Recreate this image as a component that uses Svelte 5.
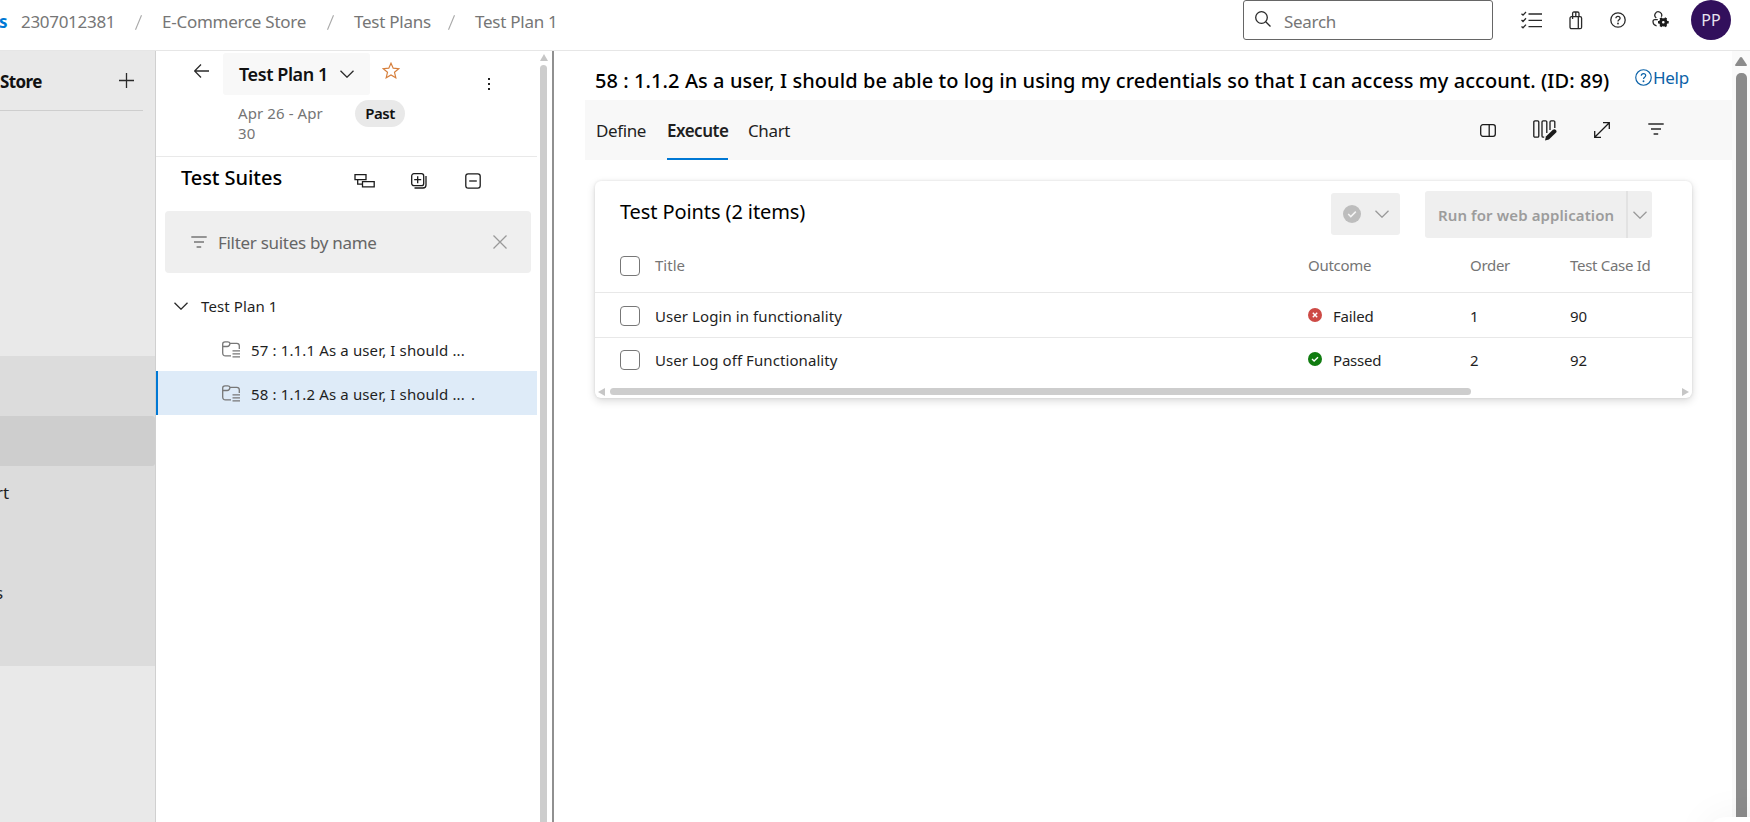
<script>
  const crumbs = [
    { text: '2307012381', w: 93 },
    { text: 'E-Commerce Store', w: 145 },
    { text: 'Test Plans', w: 74 },
    { text: 'Test Plan 1', w: 82 }
  ];
  const suites = [
    { text: '57 : 1.1.1 As a user, I should ...', selected: false },
    { text: '58 : 1.1.2 As a user, I should ...', selected: true }
  ];
  const points = [
    { title: 'User Login in functionality', outcome: 'Failed', order: 1, id: 90 },
    { title: 'User Log off Functionality', outcome: 'Passed', order: 2, id: 92 }
  ];
</script>

{#snippet chevron()}
  <svg class="ico" width="14" height="8" viewBox="0 0 14 8"><path d="M.5.7 7 7.2 13.5.7" /></svg>
{/snippet}

{#snippet filterIcon()}
  <svg class="ico" width="16" height="12" viewBox="0 0 16 12"><path d="M.3 1h15.4M3 6h10M5.6 11h4.6" /></svg>
{/snippet}

<div class="page">
  <header>
    <span class="brand">s</span>
    <nav>
      {#each crumbs as c, i}
        {#if i > 0}<svg class="slash" width="7" height="15" viewBox="0 0 7 15"><path d="M6.5.3.5 14.7" /></svg>{/if}
        <span style="width:{c.w}px">{c.text}</span>
      {/each}
    </nav>
    <div class="search">
      <svg class="ico" width="16" height="16" viewBox="0 0 16 16"><circle cx="6.5" cy="6.5" r="5.8" /><path d="m10.7 10.7 4.8 4.8" /></svg>
      <span>Search</span>
    </div>
    <div class="actions">
      <svg class="ico" width="21" height="18" viewBox="0 0 21 18"><path d="M7.5 3H21M7.5 9.3H21M7.5 15.6H21M.5 2.8 2 4.2 5 1M.5 9.1l1.5 1.4 3-3.2M.5 15.4l1.5 1.4 3-3.2" /></svg>
      <svg class="ico bag" width="14" height="19" viewBox="0 0 14 19"><rect x="1" y="5.700" width="11.600" height="12" rx="1.500" /><path d="M9.300 5.700v12M3.600 8V2.500Q3.600 1 5 1h3.600Q10 1 10 2.500v3.200M6.800 1v5" /></svg>
      <svg class="ico help" width="16" height="16" viewBox="0 0 16 16"><circle cx="8" cy="8" r="7.2" /><path d="M5.900 6.300Q6 4.300 8 4.300t2.100 1.900c0 1.500-2.100 1.600-2.100 3.200" /><circle class="fill" cx="8" cy="11.500" r=".9" /></svg>
      <svg class="ico" width="17" height="17" viewBox="0 0 17 17"><path d="M4.300 7A3.400 3.400 0 1 1 9.300 5.800M5.800 8.600H3A2 2 0 0 0 1 10.600C1 13 2.500 14.400 4.600 14.800" /><circle class="gear" cx="11.300" cy="11.300" r="2.700" /><path class="teeth" d="M8.500 6.900l1 1.700M13.100 14l1 1.700M14.100 6.900l-1 1.700M9.500 14l-1 1.700M6 11.300h2M14.500 11.300h2.200" /></svg>
      <div class="avatar">PP</div>
    </div>
  </header>

  <div class="body">
    <aside>
      <div class="project">
        <b>Store</b>
        <svg class="ico" width="15" height="15" viewBox="0 0 15 15"><path d="M7.500 0v15M0 7.500h15" /></svg>
      </div>
      <div class="group">
        <div class="current"></div>
        <div class="item">rt</div>
        <div class="item gap">s</div>
      </div>
    </aside>

    <section class="plans">
      <div class="plan-head">
        <svg class="ico back" width="15" height="14" viewBox="0 0 15 14"><path d="M15 7H.7M7 .5.600 7 7 13.500" /></svg>
        <div>
          <div class="plan-btn"><b>Test Plan 1</b>{@render chevron()}</div>
          <div class="dates"><span>Apr 26 - Apr<br />30</span><em>Past</em></div>
        </div>
        <svg class="star" width="18" height="17" viewBox="0 0 18 17"><path d="m9 1.200 2.200 5 5.500.5-4.200 3.600 1.300 5.400L9 12.900l-4.800 2.800 1.300-5.400L1.300 6.700l5.500-.5z" /></svg>
        <svg class="kebab" width="4" height="14" viewBox="0 0 4 14"><path d="M1 1h2v2H1zM1 6h2v2H1zM1 11h2v2H1z" /></svg>
      </div>
      <div class="suites-head">
        <h2>Test Suites</h2>
        <svg class="ico dark" width="21" height="16" viewBox="0 0 21 16"><path d="M1 1.700h11v5H1zM8.500 8.700h11.700v5.200H8.500zM3.700 6.700v4.500h4.800" /></svg>
        <svg class="ico dark" width="16" height="16" viewBox="0 0 16 16"><rect x=".7" y=".7" width="12" height="12" rx="2.200" /><path d="M6.700 3.200v7M3.200 6.700h7M15 3v9q0 3-3 3H3.500" /></svg>
        <svg class="ico dark" width="16" height="16" viewBox="0 0 16 16"><rect x=".8" y=".8" width="14.400" height="14.400" rx="2.400" /><path d="M4.200 8h7.600" /></svg>
      </div>
      <div class="filter">
        {@render filterIcon()}
        <span>Filter suites by name</span>
        <svg class="ico x" width="14" height="14" viewBox="0 0 14 14"><path d="m.5.5 13 13M13.500.5l-13 13" /></svg>
      </div>
      <div class="tree">
        <div class="root">{@render chevron()}<span>Test Plan 1</span></div>
        {#each suites as s}
          <div class="suite" class:selected={s.selected}>
            <svg class="ico" width="18" height="17" viewBox="0 0 18 17"><path d="M9 14.800H3.500q-2.800 0-2.800-2.800V3Q.700.800 3 .800h2.800q1.700 0 2.200 1.500h6.800q2.500 0 2.500 2.400V8M.700 5.500h4.500Q7.500 5.500 8 2.300M10.500 9.800H18M10.500 12.800H18M10.500 15.800H18" /></svg>
            <span>{s.text}</span>
            {#if s.selected}<i>.</i>{/if}
          </div>
        {/each}
      </div>
    </section>
    <div class="side-scroll">
      <svg width="8" height="7" viewBox="0 0 8 7"><path d="M4 0 8 7H0z" /></svg>
      <div></div>
    </div>
    <div class="splitter"></div>

    <main>
      <div class="title">
        <h1>58 : 1.1.2 As a user, I should be able to log in using my credentials so that I can access my account. (ID: 89)</h1>
        <a href="#help">
          <svg class="ico" width="17" height="17" viewBox="0 0 16 16"><circle cx="8" cy="8" r="7.300" /><path d="M5.900 6.300Q6 4.300 8 4.300t2.100 1.900c0 1.500-2.100 1.600-2.100 3.200" /><circle class="fill" cx="8" cy="11.500" r=".9" /></svg><span>Help</span>
        </a>
      </div>
      <div class="tabs">
        <span class="define">Define</span>
        <span class="execute">Execute</span>
        <span>Chart</span>
        <div class="tools">
          <svg class="ico dark" width="16" height="13" viewBox="0 0 16 13"><rect x=".7" y=".7" width="14.600" height="11.600" rx="2.200" /><path d="M9.200.7v11.600" /></svg>
          <svg class="ico dark" width="24" height="21" viewBox="0 0 24 21"><rect x=".8" y=".8" width="5" height="16.400" rx="1.200" /><path d="M13.800 13V2q0-1.200-1.200-1.200h-2.400Q9 .8 9 2v14q0 1.200 1.200 1.200h1M21.800 8V2q0-1.200-1.200-1.200h-2.400Q17 .8 17 2v8" /><path class="pencil" d="m12 20.600.9-4.200 7-6.600q1.600-1.200 3 .2 1.300 1.500 0 2.800l-7 6.600z" /></svg>
          <svg class="ico dark" width="16" height="16" viewBox="0 0 16 16"><path d="M.7 15.300 15.300.7M9 .7h6.300V7M.7 9v6.300H7" /></svg>
          {@render filterIcon()}
        </div>
      </div>

      <div class="card">
        <div class="card-head">
          <h3>Test Points (2 items)</h3>
          <div class="btn outcome-btn">
            <svg width="18" height="18" viewBox="0 0 18 18"><circle cx="9" cy="9" r="9" fill="#bdbdbd" /><path d="m5.200 9 2.600 2.600 5-5" fill="none" stroke="#f4f4f4" stroke-width="1.500" /></svg>
            {@render chevron()}
          </div>
          <div class="btn run"><b>Run for web application</b><div>{@render chevron()}</div></div>
        </div>
        <div class="row head">
          <span class="box"></span><span class="t">Title</span><span class="o">Outcome</span><span class="n">Order</span><span>Test Case Id</span>
        </div>
        {#each points as p, i}
          <div class="row" class:last={i === 1}>
            <span class="box"></span>
            <span class="t">{p.title}</span>
            <span class="o">
              <svg width="14" height="14" viewBox="0 0 14 14">
                <circle cx="7" cy="7" r="7" fill={p.outcome === 'Failed' ? '#cd4a45' : '#107c10'} />
                <path d={p.outcome === 'Failed' ? 'm4.800 4.800 4.400 4.400M9.200 4.800 4.800 9.200' : 'm4 7.100 2.100 2L10 5.200'} fill="none" stroke="#fff" stroke-width="1.400" />
              </svg>
              {p.outcome}
            </span>
            <span class="n">{p.order}</span>
            <span>{p.id}</span>
          </div>
        {/each}
        <div class="hscroll">
          <svg width="7" height="8" viewBox="0 0 7 8"><path d="M7 0v8L0 4z" /></svg>
          <div></div>
          <svg width="7" height="8" viewBox="0 0 7 8"><path d="M0 0v8l7-4z" /></svg>
        </div>
      </div>
    </main>
    <div class="page-scroll">
      <svg width="12" height="9" viewBox="0 0 12 9"><path d="M4.800.8Q6-.6 7.200.8L12 8q0 1-1 1H1Q0 9 0 8z" /></svg>
      <div></div>
    </div>
  </div>
  <div class="haze"></div>
</div>

<style>
  :global(body) { margin: 0; overflow: hidden; background: #fff; }
  .page, .page * { box-sizing: border-box; }
  .page { position: relative; width: 1750px; height: 822px; overflow: hidden; display: flex; flex-direction: column; font-family: "Noto Sans", "Open Sans", sans-serif; font-size: 15px; line-height: 20px; color: #1f1f1f; white-space: nowrap; }
  svg { display: block; flex: none; }
  .ico { fill: none; stroke: #2a2a2a; stroke-width: 1.3; }
  .dark { stroke: #1b1b1b; }
  .fill { fill: currentColor; stroke: none; }
  .gear { stroke-width: 2.8; stroke: #1b1b1b; }
  .teeth { stroke-width: 2.4; stroke: #1b1b1b; }
  .pencil { fill: #1b1b1b; stroke: none; }
  h1, h2, h3 { margin: 0; font-weight: 500; color: #000; }
  b { font-weight: 600; }

  header { height: 51px; flex: none; display: flex; align-items: flex-start; border-bottom: 1px solid #e6e6e6; font-size: 17px; color: #767676; }
  .brand { width: 22px; padding-top: 12px; font-weight: 700; color: #0078d4; margin-left: -1px; }
  nav { display: flex; gap: 20px; padding-top: 12px; width: 1222px; }
  nav span { letter-spacing: -.3px; }
  nav span:nth-of-type(n + 2) { margin-left: 1px; margin-right: -1px; letter-spacing: -.26px; }
  .slash { fill: none; stroke: #a8a8a8; stroke-width: 1.1; margin: 3px -1px 0 1px; }
  .search { width: 250px; height: 40px; border: 1px solid #666; border-radius: 3px; display: flex; padding: 11px 0 0 11px; gap: 13px; }
  .search span { letter-spacing: -.3px; }
  .search .ico { margin-top: -1px; }
  .actions { display: flex; color: #2a2a2a; padding: 11px 0 0 28px; }
  .bag { margin-left: 27px; }
  .help { margin: 1px 26px 0 27px; }
  .avatar { width: 40px; height: 40px; margin: -11px 0 0 22px; border-radius: 50%; background: #32105c; color: #e8e2ee; font-size: 16px; line-height: 40px; text-align: center; flex: none; }

  .body { flex: 1; display: flex; min-height: 0; }
  aside { width: 156px; background: #e9e9e9; border-right: 1px solid #d0d0d0; }
  .project { height: 60px; margin-right: 12px; border-bottom: 1px solid #cecece; display: flex; justify-content: space-between; padding: 21px 9px 0 0; font-size: 17px; color: #111; }
  .project b { font-weight: 700; letter-spacing: -.6px; }
  .project svg { margin-top: 1px; }
  .group { margin-top: 245px; height: 310px; padding-top: 60px; background: #dcdcdc; font-size: 17px; overflow: hidden; }
  .current { height: 50px; background: #cecece; border-radius: 0 3px 3px 0; }
  .item { height: 50px; padding-top: 17px; margin-left: -4px; }
  .item.gap { margin: 50px 0 0 -5px; }

  .plans { width: 381px; }
  .plan-head { height: 106px; border-bottom: 1px solid #e9e9e9; display: flex; padding-top: 2px; }
  .back { margin: 11px 14px 0 38px; }
  .plan-btn { width: 147px; height: 42px; background: #f8f8f8; border-radius: 3px; display: flex; align-items: center; justify-content: space-between; padding: 0 16px; font-size: 18px; color: #111; }
  .plan-btn b { letter-spacing: -.42px; }
  .dates { display: flex; gap: 32px; padding: 5px 0 0 15px; color: #757575; width: 147px; }
  .dates span { width: 84px; flex: none; padding-top: 3px; letter-spacing: .1px; }
  em { font-style: normal; font-weight: 600; color: #111; background: #e9e9e9; border-radius: 14px; width: 50px; height: 27px; line-height: 27px; text-align: center; flex: none; margin-left: 1px; letter-spacing: -.5px; }
  .star { margin: 9px 0 0 12px; fill: none; stroke: #d67f3c; stroke-width: 1.2; }
  .kebab { margin: 24px 0 0 87px; fill: #222; }
  .suites-head { height: 54px; display: flex; padding: 16px 0 0 25px; }
  h2 { width: 173px; font-size: 20px; line-height: 24px; margin-top: -7px; letter-spacing: -.06px; }
  .suites-head svg + svg { margin-left: 36px; }
  .suites-head svg:last-child { margin-left: 38px; }
  .filter { width: 366px; height: 62px; margin-left: 9px; background: #efefef; border-radius: 4px; display: flex; align-items: center; padding: 0 24px 0 26px; font-size: 17px; color: #666; }
  .filter span { margin: 1px auto 0 11px; letter-spacing: -.3px; }
  .filter .ico { stroke: #777; }
  .filter .x { stroke: #999; margin-top: -1px; }
  .tree { padding-top: 12px; letter-spacing: .14px; }
  .root { height: 42px; display: flex; align-items: center; padding-left: 18px; gap: 13px; letter-spacing: .1px; }
  .suite { height: 44px; display: flex; align-items: center; padding-left: 66px; gap: 11px; }
  .suite span { width: 214px; margin-right: -5px; padding-top: 1px; }
  .suite .ico { stroke: #777; }
  .suite i { font-style: normal; padding-top: 1px; }
  .selected { background: #deebf8; border-left: 2px solid #0078d4; padding-left: 64px; }
  .side-scroll { width: 15px; padding: 3px 0 0 3px; display: flex; flex-direction: column; gap: 4px; }
  .side-scroll svg, .hscroll svg { fill: #c6c6c6; }
  .side-scroll div { width: 7px; flex: 1; background: #cdcdcd; border-radius: 4px 4px 0 0; }
  .splitter { width: 2px; background: #909090; }

  main { width: 1178px; padding-left: 31px; }
  .title { height: 49px; display: flex; padding: 17px 0 0 10px; }
  h1 { width: 1040px; font-size: 20px; line-height: 24px; letter-spacing: .07px; margin-top: 1px; }
  a { display: flex; gap: 1px; color: #0b62a8; text-decoration: none; font-size: 17px; height: 20px; padding-top: 1px; }
  a .ico { stroke: #0b62a8; stroke-width: 1.1; }
  a span { margin-top: -1px; letter-spacing: -.3px; }
  .tabs { height: 60px; background: #f8f8f8; display: flex; padding: 0 68px 0 11px; font-size: 17px; line-height: 62px; }
  .tabs > span { letter-spacing: -.38px; }
  .define { width: 50px; }
  .execute { width: 61px; margin: 0 20px 0 21px; font-weight: 600; border-bottom: 2px solid #0078d4; }
  .tabs > .execute { letter-spacing: -.5px; }
  .tools { display: flex; align-items: center; margin: 0 0 0 auto; }
  .tools svg:nth-child(2) { margin: 1px 37px 0 37px; }
  .tools svg:nth-child(4) { margin: -2px 0 0 38px; }
  .card { width: 1097px; height: 217px; margin: 21px 0 0 10px; border-radius: 6px; box-shadow: 0 3px 8px rgba(0,0,0,.15), 0 0 3px rgba(0,0,0,.1); }
  .card-head { height: 62px; display: flex; padding: 10px 40px 0 25px; }
  h3 { font-weight: 400; font-size: 20px; line-height: 24px; margin: 9px auto 0 0; letter-spacing: -.1px; }
  .btn { background: #efefef; border-radius: 3px; display: flex; align-items: center; }
  .btn .ico { stroke: #999; }
  .outcome-btn { width: 69px; height: 42px; margin: 2px 25px 0 0; padding: 0 11px 0 12px; justify-content: space-between; }
  .run { width: 227px; height: 47px; color: #9c9c9c; }
  .run b { width: 201px; padding-left: 13px; letter-spacing: .1px; }
  .run div { height: 47px; width: 26px; border-left: 2px solid #e2e2e2; display: flex; align-items: center; padding-left: 5px; }
  .row { height: 45px; border-bottom: 1px solid #e8e8e8; display: flex; align-items: center; padding: 2px 0 0 25px; letter-spacing: -.2px; }
  .row .t { letter-spacing: .08px; }
  .row.head { height: 50px; color: #757575; padding: 0 0 6px 25px; letter-spacing: -.3px; }
  .row.head .t { letter-spacing: 0; }
  .row.last { border: 0; height: 43px; padding-top: 1px; }
  .box { width: 20px; height: 20px; border: 1px solid #777; border-radius: 4px; margin-right: 15px; }
  .head .box { margin-top: 2px; }
  .t { width: 653px; }
  .o { width: 162px; display: flex; align-items: center; gap: 11px; }
  .o svg { margin-top: -2px; }
  .n { width: 100px; }
  .hscroll { display: flex; gap: 5px; padding: 7px 3px 0; }
  .hscroll div { width: 861px; height: 7px; border-radius: 4px; background: #cdcdcd; margin-right: auto; }
  .page-scroll { width: 18px; padding: 6px 0 5px 3px; background: #fafafa; display: flex; flex-direction: column; gap: 7px; fill: #8b8b8b; }
  .page-scroll div { width: 11px; margin-left: 1px; flex: 1; background: #8b8b8b; border-radius: 5px 5px 0 0; }
  .haze { position: absolute; left: 1706px; top: 817px; width: 90px; height: 60px; border-radius: 20px; background: #fff; box-shadow: 0 0 40px rgba(0,0,0,.05); }
</style>
